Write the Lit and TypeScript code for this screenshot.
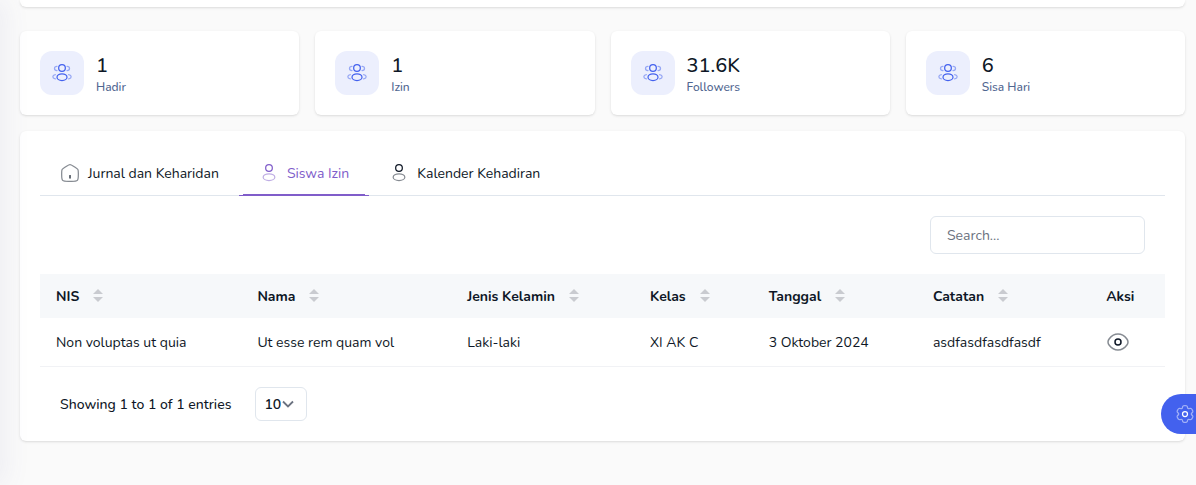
import { LitElement, html, css, svg } from "lit";
import { customElement, state } from "lit/decorators.js";
import { classMap } from "lit/directives/class-map.js";

const usersIcon = html`<svg class="icon" viewBox="0 0 24 24" width="20" height="20" fill="none" stroke="currentColor" stroke-width="1.5" stroke-linecap="round" aria-hidden="true">
  <circle cx="12" cy="6" r="4" />
  <g opacity="0.5">
    <path d="M18 9C19.6569 9 21 7.88071 21 6.5C21 5.11929 19.6569 4 18 4" />
    <path d="M6 9C4.34315 9 3 7.88071 3 6.5C3 5.11929 4.34315 4 6 4" />
    <path d="M20 19C21.7542 18.6153 23 17.6411 23 16.5C23 15.3589 21.7542 14.3847 20 14" />
    <path d="M4 19C2.24575 18.6153 1 17.6411 1 16.5C1 15.3589 2.24575 14.3847 4 14" />
  </g>
  <ellipse cx="12" cy="17" rx="6" ry="4" />
</svg>`;

const homeShape = svg`
  <path opacity="0.5" d="M2 12.2039C2 9.91549 2 8.77128 2.5192 7.82274C3.0384 6.87421 3.98695 6.28551 5.88403 5.10813L7.88403 3.86687C9.88939 2.62229 10.8921 2 12 2C13.1079 2 14.1106 2.62229 16.116 3.86687L18.116 5.10812C20.0131 6.28551 20.9616 6.87421 21.4808 7.82274C22 8.77128 22 9.91549 22 12.2039V13.725C22 17.6258 22 19.5763 20.8284 20.7881C19.6569 22 17.7712 22 14 22H10C6.22876 22 4.34315 22 3.17157 20.7881C2 19.5763 2 17.6258 2 13.725V12.2039Z" />
  <path d="M12 15L12 18" stroke-linecap="round" />`;

const userShape = svg`
  <circle cx="12" cy="6" r="4" />
  <ellipse opacity="0.5" cx="12" cy="17" rx="7" ry="4" />`;

const eyeIcon = html`<svg class="icon" viewBox="0 0 24 24" width="24" height="24" fill="none" stroke="currentColor" stroke-width="1.5" aria-hidden="true">
  <path opacity="0.5" d="M3.27489 15.2957C2.42496 14.1915 2 13.6394 2 12C2 10.3606 2.42496 9.80853 3.27489 8.70433C4.97196 6.49956 7.81811 4 12 4C16.1819 4 19.028 6.49956 20.7251 8.70433C21.575 9.80853 22 10.3606 22 12C22 13.6394 21.575 14.1915 20.7251 15.2957C19.028 17.5004 16.1819 20 12 20C7.81811 20 4.97196 17.5004 3.27489 15.2957Z" />
  <circle cx="12" cy="12" r="3" />
</svg>`;

const gearIcon = html`<svg class="icon" viewBox="0 0 24 24" width="20" height="20" fill="none" stroke="currentColor" stroke-width="1.5" aria-hidden="true">
  <circle cx="12" cy="12" r="3" />
  <path opacity="0.5" d="M13.7654 2.15224C13.3978 2 12.9319 2 12 2C11.0681 2 10.6022 2 10.2346 2.15224C9.74457 2.35523 9.35522 2.74458 9.15223 3.23463C9.05957 3.45834 9.0233 3.7185 9.00911 4.09799C8.98826 4.65568 8.70226 5.17189 8.21894 5.45093C7.73564 5.72996 7.14559 5.71954 6.65219 5.45876C6.31645 5.2813 6.07301 5.18262 5.83294 5.15102C5.30704 5.08178 4.77518 5.22429 4.35436 5.5472C4.03874 5.78938 3.80577 6.1929 3.33983 6.99993C2.87389 7.80697 2.64092 8.21048 2.58899 8.60491C2.51976 9.1308 2.66227 9.66266 2.98518 10.0835C3.13256 10.2756 3.3397 10.437 3.66119 10.639C4.1338 10.936 4.43789 11.4419 4.43786 12C4.43783 12.5581 4.13375 13.0639 3.66118 13.3608C3.33965 13.5629 3.13248 13.7244 2.98508 13.9165C2.66217 14.3373 2.51966 14.8691 2.5889 15.395C2.64082 15.7894 2.87379 16.193 3.33973 17C3.80568 17.807 4.03865 18.2106 4.35426 18.4527C4.77508 18.7756 5.30694 18.9181 5.83284 18.8489C6.07289 18.8173 6.31632 18.7186 6.65204 18.5412C7.14547 18.2804 7.73556 18.27 8.2189 18.549C8.70224 18.8281 8.98826 19.3443 9.00911 19.9021C9.02331 20.2815 9.05957 20.5417 9.15223 20.7654C9.35522 21.2554 9.74457 21.6448 10.2346 21.8478C10.6022 22 11.0681 22 12 22C12.9319 22 13.3978 22 13.7654 21.8478C14.2554 21.6448 14.6448 21.2554 14.8477 20.7654C14.9404 20.5417 14.9767 20.2815 14.9909 19.902C15.0117 19.3443 15.2977 18.8281 15.781 18.549C16.2643 18.2699 16.8544 18.2804 17.3479 18.5412C17.6836 18.7186 17.927 18.8172 18.167 18.8488C18.6929 18.9181 19.2248 18.7756 19.6456 18.4527C19.9612 18.2105 20.1942 17.807 20.6601 16.9999C21.1261 16.1929 21.3591 15.7894 21.411 15.395C21.4802 14.8691 21.3377 14.3372 21.0148 13.9164C20.8674 13.7243 20.6602 13.5628 20.3387 13.3608C19.8662 13.0639 19.5621 12.558 19.5621 11.9999C19.5621 11.4418 19.8662 10.9361 20.3387 10.6392C20.6603 10.4371 20.8675 10.2757 21.0149 10.0835C21.3378 9.66273 21.4803 9.13087 21.4111 8.60497C21.3592 8.21055 21.1262 7.80703 20.6602 7C20.1943 6.19297 19.9613 5.78945 19.6457 5.54727C19.2249 5.22436 18.693 5.08185 18.1671 5.15109C17.9271 5.18269 17.6837 5.28136 17.3479 5.4588C16.8545 5.71959 16.2644 5.73002 15.7811 5.45096C15.2977 5.17191 15.0117 4.65566 14.9909 4.09794C14.9767 3.71848 14.9404 3.45833 14.8477 3.23463C14.6448 2.74458 14.2554 2.35523 13.7654 2.15224Z" />
</svg>`;

const sortIcon = html`<svg class="icon sort" viewBox="0 0 10 20" width="10" height="20" fill="currentColor" aria-hidden="true">
  <path d="M5 3L10 8H0Z" /><path d="M0 11H10L5 16Z" />
</svg>`;

const stats = [
  { value: "1", label: "Hadir" },
  { value: "1", label: "Izin" },
  { value: "31.6K", label: "Followers" },
  { value: "6", label: "Sisa Hari" },
];

const tabs = [
  { label: "Jurnal dan Keharidan", shape: homeShape },
  { label: "Siswa Izin", shape: userShape },
  { label: "Kalender Kehadiran", shape: userShape },
];

const columns = ["NIS", "Nama", "Jenis Kelamin", "Kelas", "Tanggal", "Catatan"];
const rows = [
  ["Non voluptas ut quia", "Ut esse rem quam vol", "Laki-laki", "XI AK C", "3 Oktober 2024", "asdfasdfasdfasdf"],
];

@customElement("app-root")
export class AppRoot extends LitElement {
  @state() private activeTab = 1;

  static styles = css`
    :host {
      display: block;
      min-height: 100vh;
      overflow: hidden;
      background: #fafafa;
      color: #0e1726;
      font-family: Nunito, Lato, sans-serif;
      font-size: 14px;
      line-height: 21px;
    }
    * { box-sizing: border-box; }
    button, input, select { font: inherit; color: inherit; margin: 0; }
    button { border: 0; background: none; padding: 0; cursor: pointer; }
    .icon { display: block; flex: none; }
    .edge {
      position: fixed;
      top: 0;
      bottom: 0;
      right: 100%;
      width: 260px;
      box-shadow: 5px 0 25px 0 rgba(94, 92, 154, 0.08);
      pointer-events: none;
    }
    main { padding: 0 11px 24px 20px; }
    .card {
      background: #fff;
      border-radius: 6px;
      box-shadow: 0 1px 3px rgba(0, 0, 0, 0.1), 0 1px 2px -1px rgba(0, 0, 0, 0.1);
    }
    .previous { height: 7px; border-radius: 0 0 6px 6px; margin-bottom: 24px; }
    .stats {
      display: grid;
      grid-template-columns: repeat(4, 1fr);
      gap: 16px;
      margin-bottom: 16px;
    }
    .stat { display: flex; align-items: center; gap: 12px; padding: 20px; }
    .badge {
      display: grid;
      place-items: center;
      width: 44px;
      height: 44px;
      border-radius: 12px;
      background: #eceffd;
      color: #4361ee;
    }
    .value { margin: 0; font-size: 20px; line-height: 29px; font-weight: 500; }
    .label { margin: 0; font-size: 12px; line-height: 15px; color: #506690; font-weight: 500; }
    .panel { padding: 20px; }
    .tabs { display: flex; border-bottom: 1px solid #e0e6ed; }
    .tab {
      position: relative;
      display: flex;
      align-items: flex-start;
      gap: 8px;
      padding: 12px 20px 11px;
      margin-bottom: -1px;
      border-bottom: 1px solid transparent;
    }
    .tab.active { color: #805dca; border-color: #805dca; }
    .tab.active::after {
      content: "";
      position: absolute;
      inset: auto 4px 0;
      height: 1px;
      background: #805dca;
    }
    .toolbar { display: flex; justify-content: flex-end; padding: 20px; }
    .search {
      width: 215px;
      height: 38px;
      padding: 8px 16px;
      border: 1px solid #e0e6ed;
      border-radius: 6px;
      background: #fff;
    }
    .search::placeholder { color: #6b7280; opacity: 1; }
    table { width: 100%; table-layout: fixed; border-collapse: collapse; }
    .w1 { width: 17.9%; }
    .w2 { width: 18.65%; }
    .w3 { width: 16.25%; }
    .w4 { width: 10.55%; }
    .w5 { width: 14.6%; }
    .w6 { width: 15.4%; }
    th { padding: 12px 16px 11px; background: #f6f8fa; text-align: left; font-weight: 700; }
    .sorter { display: flex; align-items: flex-start; gap: 14px; font-weight: 700; }
    .sort { color: #c9cbd0; }
    td { padding: 14px 16px 13px; border-bottom: 1px solid #f1f2f5; white-space: nowrap; }
    .action { padding: 12px 16px; }
    .view { display: block; }
    .footer { display: flex; align-items: center; gap: 24px; padding: 20px 20px 0; font-weight: 500; }
    .size { display: grid; align-items: center; }
    .size > * { grid-area: 1 / 1; }
    .size select {
      appearance: none;
      width: 52px;
      height: 34px;
      padding: 6px 8px 5px;
      border: 1px solid #e0e6ed;
      border-radius: 6px;
      background: #fff;
      font-weight: 600;
    }
    .size .icon { justify-self: end; margin-right: 13px; color: #6b7280; pointer-events: none; }
    .settings {
      position: fixed;
      right: 0;
      top: 394px;
      height: 40px;
      padding: 0 1px 0 14px;
      border-radius: 20px 0 0 20px;
      background: #4361ee;
      color: #fff;
    }
  `;

  render() {
    return html`
      <main>
        <div class="card previous"></div>
        <section class="stats">
          ${stats.map(
            (s) => html`<div class="card stat">
              <span class="badge">${usersIcon}</span>
              <div>
                <p class="value">${s.value}</p>
                <p class="label">${s.label}</p>
              </div>
            </div>`
          )}
        </section>
        <section class="card panel">
          <div class="tabs" role="tablist">
            ${tabs.map(
              (t, i) => html`<button
                role="tab"
                aria-selected=${i === this.activeTab}
                class=${classMap({ tab: true, active: i === this.activeTab })}
                @click=${() => (this.activeTab = i)}
              >
                <svg class="icon" viewBox="0 0 24 24" width="20" height="20" fill="none" stroke="currentColor" stroke-width="1.5" aria-hidden="true">${t.shape}</svg>
                <span>${t.label}</span>
              </button>`
            )}
          </div>
          <div class="toolbar">
            <input class="search" type="text" placeholder="Search..." aria-label="Search" />
          </div>
          <table>
            <colgroup>
              <col class="w1" /><col class="w2" /><col class="w3" /><col class="w4" /><col class="w5" /><col class="w6" /><col />
            </colgroup>
            <thead>
              <tr>
                ${columns.map((c) => html`<th scope="col"><button class="sorter">${c}${sortIcon}</button></th>`)}
                <th scope="col">Aksi</th>
              </tr>
            </thead>
            <tbody>
              ${rows.map(
                (r) => html`<tr>
                  ${r.map((cell) => html`<td>${cell}</td>`)}
                  <td class="action"><button class="view" aria-label="Lihat">${eyeIcon}</button></td>
                </tr>`
              )}
            </tbody>
          </table>
          <div class="footer">
            <span>Showing 1 to 1 of 1 entries</span>
            <div class="size">
              <select aria-label="Entries per page">
                <option>10</option>
                <option>20</option>
                <option>30</option>
                <option>50</option>
              </select>
              <svg class="icon" viewBox="0 0 12 8" width="12" height="8" fill="none" stroke="currentColor" stroke-width="1.8" aria-hidden="true"><path d="M1 1.5L6 6.5L11 1.5" /></svg>
            </div>
          </div>
        </section>
      </main>
      <div class="edge"></div>
      <button class="settings" aria-label="Settings">${gearIcon}</button>
    `;
  }
}
